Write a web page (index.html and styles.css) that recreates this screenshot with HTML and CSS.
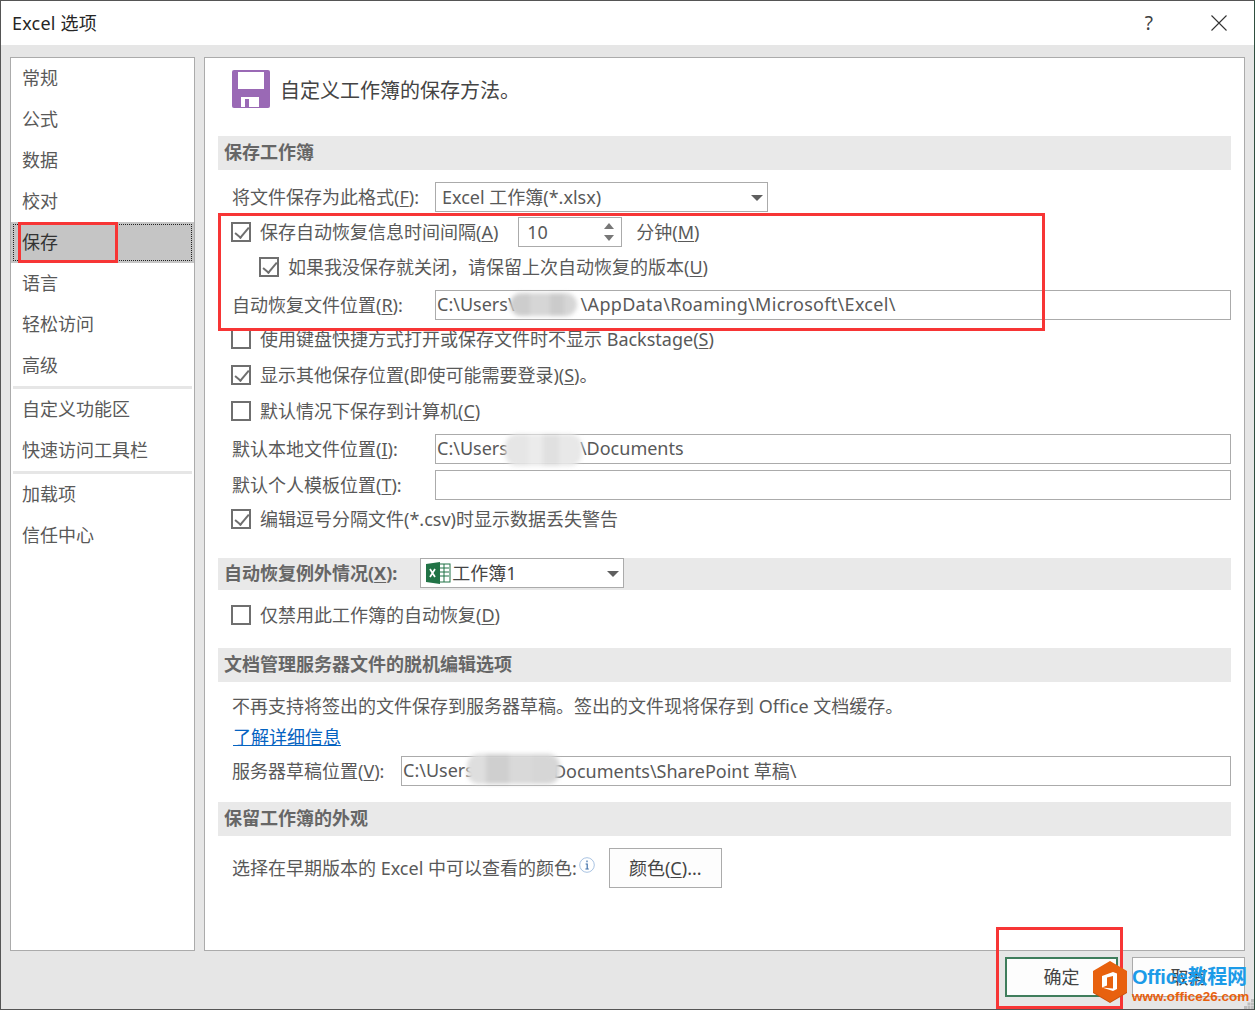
FILE: index.html
```html
<!DOCTYPE html>
<html lang="zh-CN">
<head>
    <meta charset="UTF-8">
    <meta name="viewport" content="width=device-width, initial-scale=1.0">
    <title>Excel 选项</title>
    <link rel="stylesheet" href="styles.css">
</head>
<body>
    <div class="dialog">
        <div class="titlebar">
            <span class="title">Excel 选项</span>
            <span class="help">?</span>
            <svg class="close" width="16" height="16" viewBox="0 0 16 16"><path d="M0.5 0.5 15.5 15.5M15.5 0.5 0.5 15.5" stroke="#333" stroke-width="1.1" fill="none"/></svg>
        </div>

        <div class="content">
            <ul class="nav">
                <li>常规</li>
                <li>公式</li>
                <li>数据</li>
                <li>校对</li>
                <li class="active">保存</li>
                <li>语言</li>
                <li>轻松访问</li>
                <li class="group-end">高级</li>
                <li>自定义功能区</li>
                <li class="group-end">快速访问工具栏</li>
                <li>加载项</li>
                <li>信任中心</li>
            </ul>

            <div class="panel">
                <div class="panel-head">
                    <svg width="38" height="38" viewBox="0 0 38 38">
                        <path d="M2 0H36Q38 0 38 2V36Q38 38 36 38H2Q0 38 0 36V2Q0 0 2 0Z" fill="#9a69b5"/>
                        <rect x="6" y="2" width="26" height="17" fill="#fff"/>
                        <rect x="9" y="27" width="18" height="10" fill="#fff"/>
                        <rect x="13" y="29" width="4" height="8" fill="#9a69b5"/>
                    </svg>
                    <span>自定义工作簿的保存方法。</span>
                </div>

                <div class="section-title"><span>保存工作簿</span></div>
                <div class="rows rows-save">
                    <div class="row">
                        <span class="label">将文件保存为此格式(<u>F</u>):</span>
                        <div class="select select-format"><span>Excel 工作簿(*.xlsx)</span><i class="arrow"></i></div>
                    </div>
                    <div class="row">
                        <span class="check on"></span><span>保存自动恢复信息时间间隔(<u>A</u>)</span>
                        <div class="spinner"><span>10</span><i class="spin-up"></i><i class="spin-down"></i></div>
                        <span>分钟(<u>M</u>)</span>
                    </div>
                    <div class="row row-indent">
                        <span class="check on"></span><span>如果我没保存就关闭，请保留上次自动恢复的版本(<u>U</u>)</span>
                    </div>
                    <div class="row">
                        <span class="label">自动恢复文件位置(<u>R</u>):</span>
                        <div class="input">C:\Users\<b class="smudge smudge-a"></b><span class="gap-a"></span><span class="spaced">\AppData\Roaming\Microsoft\Excel\</span></div>
                    </div>
                    <div class="row">
                        <span class="check"></span><span>使用键盘快捷方式打开或保存文件时不显示 Backstage(<u>S</u>)</span>
                    </div>
                    <div class="row">
                        <span class="check on"></span><span>显示其他保存位置(即使可能需要登录)(<u>S</u>)。</span>
                    </div>
                    <div class="row">
                        <span class="check"></span><span>默认情况下保存到计算机(<u>C</u>)</span>
                    </div>
                    <div class="row">
                        <span class="label">默认本地文件位置(<u>I</u>):</span>
                        <div class="input">C:\Users<b class="smudge smudge-b"></b><span class="gap-b"></span>\Documents</div>
                    </div>
                    <div class="row">
                        <span class="label">默认个人模板位置(<u>T</u>):</span>
                        <div class="input"></div>
                    </div>
                    <div class="row">
                        <span class="check on"></span><span>编辑逗号分隔文件(*.csv)时显示数据丢失警告</span>
                    </div>
                </div>

                <div class="section-title section-select">
                    <span>自动恢复例外情况(<u>X</u>):</span>
                    <div class="select select-book">
                        <svg width="26" height="22" viewBox="0 0 26 22">
                            <rect x="10" y="2" width="14" height="18" fill="#fff" stroke="#217346"/>
                            <path d="M14 6H23M14 10H23M14 14H23M18 2V20" stroke="#217346" fill="none"/>
                            <path d="M0 2 14 0V22L0 20Z" fill="#217346"/>
                            <path d="M4 7 9 15M9 7 4 15" stroke="#fff" stroke-width="1.7" fill="none"/>
                        </svg>
                        <span>工作簿1</span><i class="arrow"></i>
                    </div>
                </div>
                <div class="row row-single">
                    <span class="check"></span><span>仅禁用此工作簿的自动恢复(<u>D</u>)</span>
                </div>

                <div class="section-title section-offline"><span>文档管理服务器文件的脱机编辑选项</span></div>
                <div class="rows rows-offline">
                    <div class="row"><span>不再支持将签出的文件保存到服务器草稿。签出的文件现将保存到 Office 文档缓存。</span></div>
                    <div class="row"><span><a class="more-link">了解详细信息</a></span></div>
                    <div class="row">
                        <span class="label label-short">服务器草稿位置(<u>V</u>):</span>
                        <div class="input">C:\Users<b class="smudge smudge-c"></b><span class="gap-c"></span>Documents\SharePoint 草稿\</div>
                    </div>
                </div>

                <div class="section-title section-look"><span>保留工作簿的外观</span></div>
                <div class="row row-colors">
                    <span>选择在早期版本的 Excel 中可以查看的颜色:</span>
                    <svg class="info" width="16" height="16" viewBox="0 0 16 16">
                        <circle cx="8" cy="8" r="7.3" fill="#fff" stroke="#a9c3e2"/>
                        <path d="M8 3.6V5.2M6.6 7H8.2V12M6.4 12H9.8" stroke="#3f6fa8" stroke-width="1.2" fill="none"/>
                    </svg>
                    <button class="btn btn-color">颜色(<u>C</u>)...</button>
                </div>
            </div>
        </div>

        <div class="footer">
            <button class="btn btn-ok">确定</button>
            <button class="btn btn-cancel">取消</button>
        </div>

        <div class="mark mark-nav"></div>
        <div class="mark mark-rows"></div>
        <div class="mark mark-ok"></div>

        <div class="watermark">
            <svg width="36" height="43" viewBox="0 0 36 43">
                <path d="M18 1 35 11V32L18 42 1 32V11Z" fill="#c9500c"/>
                <path d="M18 0 35 10V31L18 41 1 31V10Z" fill="#e8610e"/>
                <path d="M10 15 21 11 25 12.5V28L21 30 10 26.5 21 27.5V15L15 16.5V24.5L10 26.5Z" fill="#fff"/>
            </svg>
            <div class="watermark-text">
                <div class="watermark-name">Office教程网</div>
                <div class="watermark-url">www.office26.com</div>
            </div>
        </div>

        <svg class="grip" width="10" height="10" viewBox="0 0 10 10">
            <path d="M7 0H10V3H7ZM3.5 3.5H6.5V6.5H3.5ZM7 3.5H10V6.5H7ZM0 7H3V10H0ZM3.5 7H6.5V10H3.5ZM7 7H10V10H7Z" fill="#bdbdbd"/>
        </svg>
    </div>
</body>
</html>
```

FILE: styles.css
```css
* {
    box-sizing: border-box;
}

body {
    margin: 0;
    font-family: "Noto Sans", "Noto Sans CJK SC", sans-serif;
    font-size: 18px;
    color: #595959;
}

u {
    text-underline-offset: 2px;
}

.dialog {
    position: relative;
    width: 1255px;
    height: 1010px;
    overflow: hidden;
    background: #e6e6e6;
    border-top: 1px solid #555;
    border-left: 1px solid #555;
    border-right: 1px solid #2f4f3f;
    border-bottom: 1px solid #555;
}

.titlebar {
    display: flex;
    align-items: center;
    height: 44px;
    padding-left: 11px;
    background: #fff;
}

.title {
    flex: 1;
    padding-bottom: 3px;
    letter-spacing: 0.2px;
    color: #262626;
}

.help {
    margin-right: 58px;
    font-size: 19px;
    color: #404040;
}

.close {
    margin-right: 27px;
}

.content {
    display: flex;
    gap: 9px;
    height: 894px;
    margin: 12px 9px 0;
}

.nav {
    width: 185px;
    margin: 0;
    padding: 0;
    list-style: none;
    background: #fff;
    border: 1px solid #ababab;
}

.nav li {
    display: flex;
    align-items: center;
    height: 41px;
    padding-left: 11px;
    padding-bottom: 4px;
}

.nav .active {
    height: 41px;
    color: #333;
    background: #c5c5c5;
    outline: 1px dotted #222;
    outline-offset: -3px;
}

.nav .group-end {
    position: relative;
    height: 44px;
    padding-bottom: 3px;
    border-bottom: 3px solid #e6e6e6;
    margin: 0 2px;
    padding-left: 9px;
}

.panel {
    flex: 1;
    padding: 0 13px 0 13px;
    background: #fff;
    border: 1px solid #ababab;
}

.panel-head {
    display: flex;
    align-items: flex-start;
    gap: 10px;
    height: 78px;
    padding: 12px 0 0 14px;
    font-size: 20px;
    line-height: 42px;
    color: #444;
}

.section-title {
    display: flex;
    align-items: center;
    height: 34px;
    padding-left: 6px;
    font-weight: 700;
    color: #666;
    background: #e9e9e9;
}

.section-title > span {
    padding-bottom: 4px;
}

.rows {
    display: grid;
}

.rows-save {
    grid-template-rows: 36px 34px 36px 40px 28px 44px 28px 48px 24px 44px;
    margin: 9px 0 17px;
}

.rows-offline {
    grid-template-rows: 36px 26px 42px;
    margin-top: 6px;
}

.row {
    display: flex;
    align-items: center;
    padding-left: 14px;
    white-space: nowrap;
}

.row > span:not(.check) {
    padding-bottom: 3px;
}

.row-indent {
    padding-left: 42px;
}

.row-single {
    height: 36px;
    margin-top: 7px;
}

.label {
    width: 203px;
}

.label-short {
    width: 169px;
}

.check {
    flex: none;
    position: relative;
    width: 20px;
    height: 20px;
    margin: 0 9px 0 -1px;
    background: #fff;
    border: 2px solid #6f6f6f;
}

.check.on::after {
    content: "";
    position: absolute;
    left: 5px;
    top: 0;
    width: 6px;
    height: 12px;
    border: solid #6f6f6f;
    border-width: 0 2px 2px 0;
    transform: rotate(40deg);
}

.select,
.input,
.spinner {
    position: relative;
    display: flex;
    align-items: center;
    height: 30px;
    padding-bottom: 2px;
    background: #fff;
    border: 1px solid #ababab;
}

.input {
    flex: 1;
    padding-left: 1px;
}

.select-format {
    width: 333px;
    padding-left: 6px;
}

.select-book {
    align-self: flex-start;
    width: 204px;
    margin-left: 23px;
    padding-left: 5px;
    font-weight: 400;
    color: #444;
}

.select-book svg {
    margin-top: 2px;
}

.arrow {
    position: absolute;
    right: 4px;
    top: 12px;
    border: 6px solid transparent;
    border-top: 6px solid #5f5f5f;
    border-bottom: 0;
}

.spinner {
    width: 104px;
    margin: 0 14px 0 20px;
    padding-left: 8px;
    padding-bottom: 0;
}

.spin-up,
.spin-down {
    position: absolute;
    right: 7px;
    border: 5px solid transparent;
}

.spin-up {
    top: 5px;
    border-top: 0;
    border-bottom: 6px solid #777;
}

.spin-down {
    bottom: 5px;
    border-bottom: 0;
    border-top: 6px solid #777;
}

.spaced {
    letter-spacing: 0.3px;
}

.smudge {
    position: absolute;
    border-radius: 12px;
    filter: blur(2px);
}

.smudge-a {
    left: 74px;
    top: 2px;
    width: 67px;
    height: 23px;
    background: linear-gradient(90deg, #cdcdcd 0 30%, #d6d6d6 30% 60%, #cbcbcb 60% 80%, #d6d6d6 80%);
}

.smudge-b {
    left: 69px;
    top: -1px;
    width: 77px;
    height: 32px;
    background: linear-gradient(90deg, #e6e6e6 0 30%, #ebebeb 30% 50%, #e0e0e0 50% 70%, #e8e8e8 70%);
}

.smudge-c {
    left: 65px;
    top: -3px;
    width: 93px;
    height: 30px;
    background: linear-gradient(90deg, #dedede 0 20%, #cfcfcf 20% 45%, #d9d9d9 45% 70%, #d6d6d6 70%);
}

.gap-a {
    width: 66px;
}

.gap-b {
    width: 72px;
}

.gap-c {
    width: 79px;
}

.section-select {
    height: 32px;
}

.section-offline {
    margin-top: 15px;
}

.section-look {
    margin-top: 10px;
}

.more-link {
    margin-left: 1px;
    color: #0563c1;
    text-decoration: underline;
}

.row-colors {
    height: 40px;
    margin-top: 12px;
}

.info {
    margin: -6px 14px 0 2px;
}

.btn {
    font: inherit;
    padding: 0 0 3px;
    background: #fdfdfd;
    border: 1px solid #ababab;
    color: #444;
}

.btn-color {
    width: 113px;
    height: 40px;
}

.footer {
    display: flex;
    justify-content: flex-end;
    gap: 14px;
    margin: 6px 9px 0 0;
}

.btn-ok,
.btn-cancel {
    width: 113px;
    height: 40px;
}

.btn-ok {
    border: 2px solid #3f7d5c;
}

.mark {
    position: absolute;
    border: 3px solid #f73535;
}

.mark-nav {
    left: 17px;
    top: 221px;
    width: 100px;
    height: 41px;
}

.mark-rows {
    left: 217px;
    top: 212px;
    width: 827px;
    height: 118px;
}

.mark-ok {
    left: 995px;
    top: 926px;
    width: 127px;
    height: 82px;
}

.watermark {
    position: absolute;
    left: 1091px;
    top: 960px;
    display: flex;
    gap: 4px;
    align-items: flex-start;
}

.watermark-text {
    font-family: "Liberation Sans", "Noto Sans CJK SC", sans-serif;
    font-weight: 700;
    white-space: nowrap;
}

.watermark-name {
    margin-top: 4px;
    font-size: 20px;
    line-height: 24px;
    letter-spacing: -0.2px;
    color: #1c9be8;
}

.watermark-url {
    font-size: 13.5px;
    line-height: 15px;
    color: #e8610e;
}

.grip {
    position: absolute;
    right: 0;
    bottom: 0;
}
```
